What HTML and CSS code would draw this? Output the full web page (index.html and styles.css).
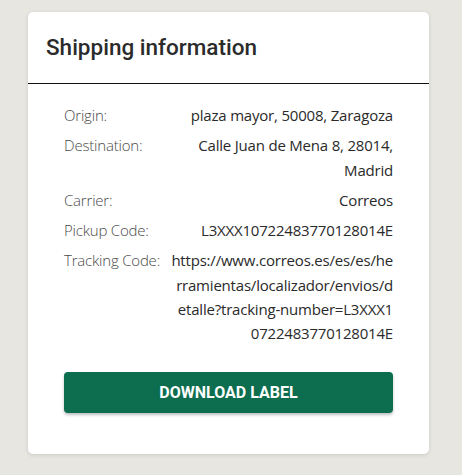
FILE: index.html
```html
<!DOCTYPE html>
<html lang="en">
<head>
<meta charset="utf-8">
<title>Shipping information</title>
<link rel="stylesheet" href="styles.css">
</head>
<body>
  <section class="card">
    <header class="card-header">
      <h2 class="card-title">Shipping information</h2>
    </header>
    <div class="card-body">
      <dl class="info">
        <dt class="info-label">Origin:</dt>
        <dd class="info-value">plaza mayor, 50008, Zaragoza</dd>
        <dt class="info-label">Destination:</dt>
        <dd class="info-value">Calle Juan de Mena 8, 28014, Madrid</dd>
        <dt class="info-label">Carrier:</dt>
        <dd class="info-value">Correos</dd>
        <dt class="info-label">Pickup Code:</dt>
        <dd class="info-value">L3XXX10722483770128014E</dd>
        <dt class="info-label">Tracking Code:</dt>
        <dd class="info-value info-url">https://www.correos.es/es/es/he<wbr>rramientas/localizador/envios/d<wbr>etalle?tracking-number=L3XXX1<wbr>0722483770128014E</dd>
      </dl>
      <button class="btn-primary" type="button">Download label</button>
    </div>
  </section>
</body>
</html>
```
FILE: styles.css
```css
* { box-sizing: border-box; }
html, body { margin: 0; padding: 0; }
body {
  background: #e8e6e0;
  padding: 12px 33px 22px 28px;
  font-family: "Open Sans", "Noto Sans", sans-serif;
}
.card {
  background: #fff;
  border-radius: 5px;
  box-shadow: 0 1px 4px rgba(0,0,0,0.12);
  overflow: hidden;
}
.card-header {
  padding: 21px 18px 22px;
  border-bottom: 1px solid #111;
}
.card-title {
  margin: 0;
  font-family: Roboto, sans-serif;
  font-weight: 500;
  font-size: 22.5px;
  line-height: 28px;
  color: #2b2b2b;
}
.card-body {
  padding: 19px 36px 41px;
}
.info {
  margin: 0;
  display: grid;
  grid-template-columns: max-content 1fr;
  column-gap: 8px;
  row-gap: 6px;
  font-size: 15px;
  letter-spacing: -0.2px;
  line-height: 24.25px;
}
.info-label {
  font-weight: 300;
  color: #4a4a4a;
}
.info-value {
  margin: 0;
  text-align: right;
  color: #2a2a2a;
}
.info-url { word-break: normal; }
.btn-primary {
  display: block;
  width: 100%;
  margin-top: 27px;
  height: 41px;
  border: 0;
  border-radius: 4px;
  background: #0d6e4f;
  color: #fff;
  font-family: Roboto, sans-serif;
  font-weight: 700;
  font-size: 16px;
  text-transform: uppercase;
  box-shadow: 0 2px 3px rgba(0,0,0,0.25);
  cursor: pointer;
}
```
